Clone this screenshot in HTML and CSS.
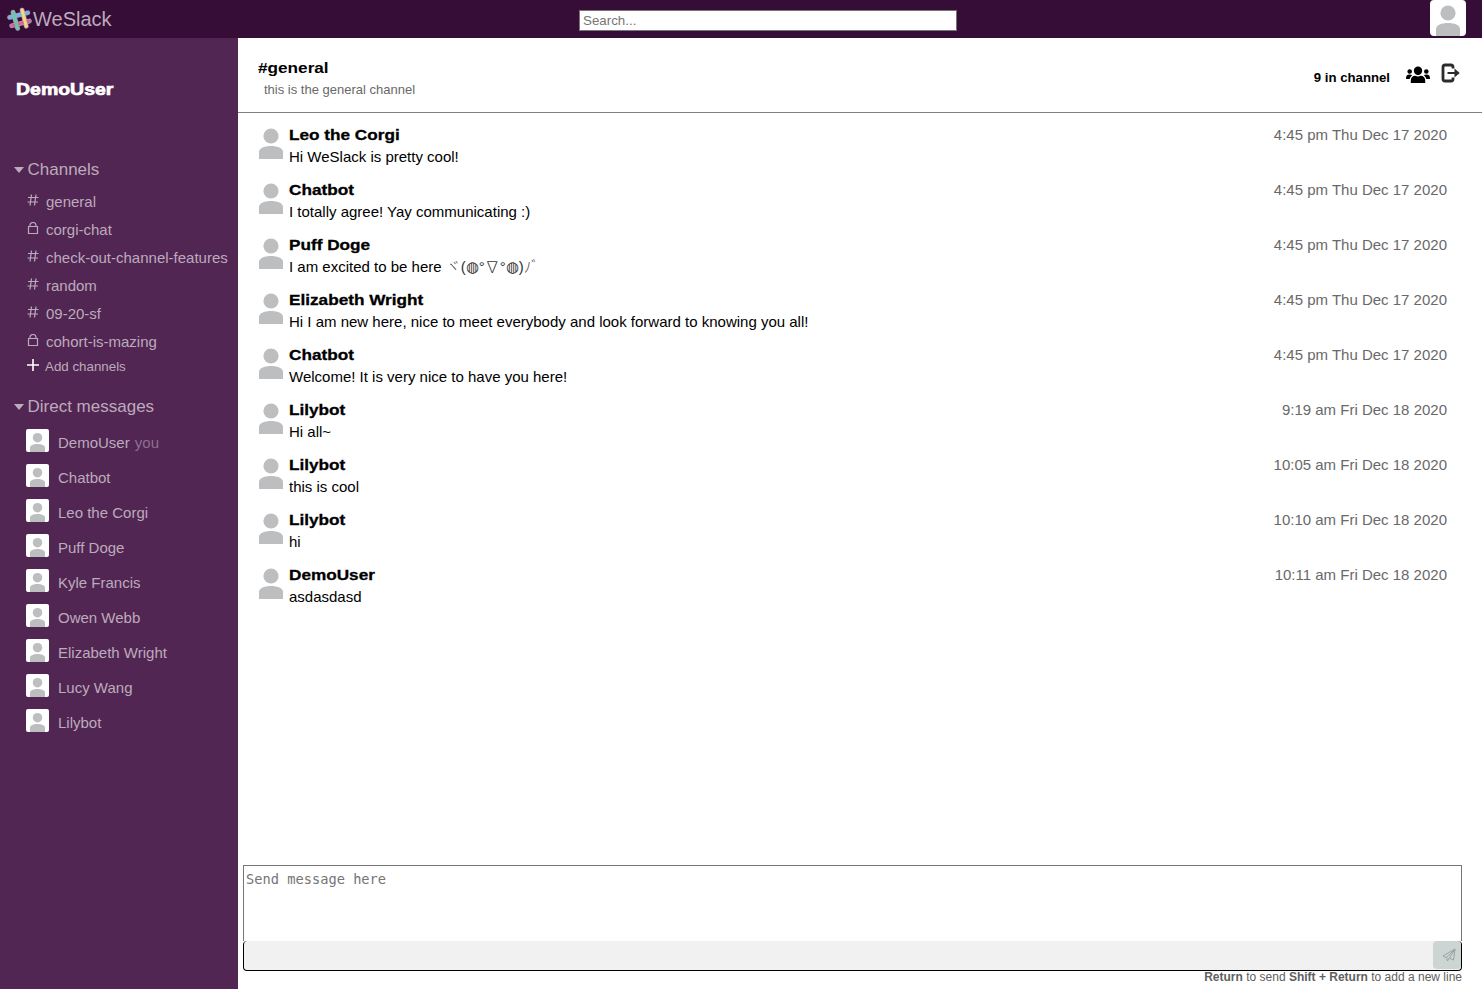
FILE: index.html
```
<!DOCTYPE html>
<html lang="en">
<head>
<meta charset="utf-8">
<title>WeSlack</title>
<link rel="stylesheet" href="styles.css">
</head>
<body>
<svg class="defs" aria-hidden="true">
  <symbol id="person" viewBox="0 0 24 32"><circle cx="12" cy="9" r="7.600"/><path d="M0 32v-7c0-4 6-6 12-6s12 2 12 6v7z"/></symbol>
  <symbol id="hash" viewBox="0 0 12 12"><path d="M4.500 0.500L3 11.500M9 0.500L7.500 11.500M1 3.500h10.500M0.500 8h10.500"/></symbol>
  <symbol id="lock" viewBox="0 0 12 12"><path d="M1.500 4.500h9v7h-9zM3 4.500V3.200a3 2.700 0 0 1 6 0V4.500"/></symbol>
</svg>
<header class="topbar">
  <div class="brand">
    <svg class="logo" viewBox="0 0 24 24"><g class="logo-edge"><path d="M2.500 10L20 5.500M4.500 18L21.500 13.500M5.800 5L10.200 20.500M14.500 3L18.500 18.500"/></g><path class="blue" d="M2.500 10L20 5.500"/><path class="pink" d="M4.500 18L21.500 13.500"/><path class="green" d="M5.800 5L10.200 20.500"/><path class="yellow" d="M14.500 3L18.500 18.500"/></svg>
    <span>WeSlack</span>
  </div>
  <input class="search" type="text" placeholder="Search...">
  <div class="account"><svg><use href="#person"/></svg></div>
</header>
<div class="workspace">
  <aside class="sidebar">
    <h1 class="user wide">DemoUser</h1>
    <h2 class="heading"><i class="caret"></i>Channels</h2>
    <ul class="channels">
      <li><svg><use href="#hash"/></svg>general</li>
      <li><svg><use href="#lock"/></svg>corgi-chat</li>
      <li><svg><use href="#hash"/></svg>check-out-channel-features</li>
      <li><svg><use href="#hash"/></svg>random</li>
      <li><svg><use href="#hash"/></svg>09-20-sf</li>
      <li><svg><use href="#lock"/></svg>cohort-is-mazing</li>
    </ul>
    <div class="add"><svg viewBox="0 0 12 12"><path d="M6 0v12M0 6h12"/></svg>Add channels</div>
    <h2 class="heading"><i class="caret"></i>Direct messages</h2>
    <ul class="people">
      <li><b class="thumb"><svg><use href="#person"/></svg></b>DemoUser <span class="you">you</span></li>
      <li><b class="thumb"><svg><use href="#person"/></svg></b>Chatbot</li>
      <li><b class="thumb"><svg><use href="#person"/></svg></b>Leo the Corgi</li>
      <li><b class="thumb"><svg><use href="#person"/></svg></b>Puff Doge</li>
      <li><b class="thumb"><svg><use href="#person"/></svg></b>Kyle Francis</li>
      <li><b class="thumb"><svg><use href="#person"/></svg></b>Owen Webb</li>
      <li><b class="thumb"><svg><use href="#person"/></svg></b>Elizabeth Wright</li>
      <li><b class="thumb"><svg><use href="#person"/></svg></b>Lucy Wang</li>
      <li><b class="thumb"><svg><use href="#person"/></svg></b>Lilybot</li>
    </ul>
  </aside>
  <main class="main">
    <div class="channel-head">
      <div><div class="channel-name wide">#general</div><div class="topic">this is the general channel</div></div>
      <div class="tools">
        <span class="count">9 in channel</span>
        <svg class="members" viewBox="0 0 24 18"><circle cx="3.700" cy="5.500" r="2.300"/><circle cx="20.300" cy="5.500" r="2.300"/><circle cx="12" cy="4.700" r="4.200"/><path d="M0 12.500c0-2.500 1-4 3.500-4 1.200 0 2 .3 2.700.9C4.500 10.500 4 11.500 3.700 13H0zM24 12.500c0-2.500-1-4-3.500-4-1.200 0-2 .3-2.700.9 1.700 1.100 2.200 2.100 2.500 3.600H24zM4.800 17v-2.500c0-3 2-4.700 4.500-4.700 1.800.8 3.600.8 5.400 0 2.500 0 4.500 1.700 4.500 4.700V17z"/></svg>
        <svg class="leave" viewBox="0 0 19 20"><path d="M12 5.500V4Q12 2 10 2H4Q2 2 2 4v12q0 2 2 2h6Q12 18 12 16V14.500"/><path class="arrow" d="M6.500 10h9"/><path class="tip" d="M13.500 5.500v9L18.700 10z"/></svg>
      </div>
    </div>
    <div class="messages">
      <article class="message"><svg><use href="#person"/></svg><div><h3 class="wide">Leo the Corgi</h3><p>Hi WeSlack is pretty cool!</p></div><time>4:45 pm Thu Dec 17 2020</time></article>
      <article class="message"><svg><use href="#person"/></svg><div><h3 class="wide">Chatbot</h3><p>I totally agree! Yay communicating :)</p></div><time>4:45 pm Thu Dec 17 2020</time></article>
      <article class="message"><svg><use href="#person"/></svg><div><h3 class="wide">Puff Doge</h3><p>I am excited to be here <span class="kao">ヾ(◍°∇°◍)ﾉﾞ</span></p></div><time>4:45 pm Thu Dec 17 2020</time></article>
      <article class="message"><svg><use href="#person"/></svg><div><h3 class="wide">Elizabeth Wright</h3><p>Hi I am new here, nice to meet everybody and look forward to knowing you all!</p></div><time>4:45 pm Thu Dec 17 2020</time></article>
      <article class="message"><svg><use href="#person"/></svg><div><h3 class="wide">Chatbot</h3><p>Welcome! It is very nice to have you here!</p></div><time>4:45 pm Thu Dec 17 2020</time></article>
      <article class="message"><svg><use href="#person"/></svg><div><h3 class="wide">Lilybot</h3><p>Hi all~</p></div><time>9:19 am Fri Dec 18 2020</time></article>
      <article class="message"><svg><use href="#person"/></svg><div><h3 class="wide">Lilybot</h3><p>this is cool</p></div><time>10:05 am Fri Dec 18 2020</time></article>
      <article class="message"><svg><use href="#person"/></svg><div><h3 class="wide">Lilybot</h3><p>hi</p></div><time>10:10 am Fri Dec 18 2020</time></article>
      <article class="message"><svg><use href="#person"/></svg><div><h3 class="wide">DemoUser</h3><p>asdasdasd</p></div><time>10:11 am Fri Dec 18 2020</time></article>
    </div>
    <form class="composer">
      <textarea placeholder="Send message here"></textarea>
      <div class="actions"><button type="button" aria-label="Send"><svg viewBox="0 0 14 14"><path d="M13 1L1 8l3.500 1.500L13 1l-1.500 11-4-2L13 1M4.500 9.500L5.500 13l2-3"/></svg></button></div>
      <div class="hint"><b>Return</b> to send <b>Shift + Return</b> to add a new line</div>
    </form>
  </main>
</div>
</body>
</html>
```
FILE: styles.css
```
* { box-sizing: border-box; }
body { margin: 0; height: 989px; overflow: hidden; display: flex; flex-direction: column; background: #fff; font: 15px/22px "Liberation Sans", Arial, sans-serif; color: #000; }
h1, h2, h3, p, ul { margin: 0; padding: 0; list-style: none; }
svg { display: block; flex: none; }
.defs { position: absolute; width: 0; height: 0; }
.wide { width: max-content; font-weight: 700; transform: scaleX(1.145); transform-origin: left; -webkit-text-stroke: 0.3px currentColor; }

.topbar { height: 38px; flex: none; background: #350d36; display: grid; grid-template-columns: 579px 378px 1fr; align-items: start; }
.brand { display: flex; align-items: center; height: 38px; padding-left: 7px; font-size: 20px; color: #bcabbc; }
.logo { width: 25px; height: 25px; margin-right: 1px; fill: none; stroke-linecap: round; stroke-width: 3; }
.logo-edge { stroke: #a898be; stroke-width: 4.6; }
.blue { stroke: #79b4dc; stroke-dasharray: 2.5 1; }
.pink { stroke: #d4668f; stroke-dasharray: 2.5 1; }
.green { stroke: #6ec5ab; }
.yellow { stroke: #f8d57e; }
.search { width: 378px; height: 21px; margin-top: 10px; padding: 1px 3px; border: 1px solid #767676; font: 13.33px "Liberation Sans", Arial, sans-serif; background: #fff; }
.search::placeholder, textarea::placeholder { color: #757575; opacity: 1; }
.account { justify-self: end; width: 36px; height: 36px; margin-right: 16px; border-radius: 4px; background: #fff; padding: 4px 6px 0; fill: #bcbec0; overflow: hidden; }
.account svg { width: 24px; height: 32px; }

.workspace { flex: 1; display: flex; min-height: 0; }
.sidebar { width: 238px; flex: none; background: #522653; color: #bcabbc; padding-top: 40px; }
.user { margin: 0 0 56px 16px; font-size: 17px; line-height: 24px; color: #fff; -webkit-text-stroke-width: 0.7px; }
.heading { display: flex; align-items: center; height: 24px; padding-left: 14px; font-size: 17px; font-weight: 400; }
.caret { border: 5.500px solid transparent; border-top: 6px solid #bcabbc; border-bottom: 0; margin-right: 3.5px; }
.channels { padding: 6px 0 0 27px; }
.channels li { height: 28px; display: flex; align-items: center; white-space: nowrap; }
.channels svg { width: 12px; height: 12px; margin: -5px 7px 0 0; fill: none; stroke: #bcabbc; stroke-width: 1.200; }
.add { display: flex; align-items: center; height: 22px; padding-left: 27px; font-size: 13.33px; margin-bottom: 17px; }
.add svg { width: 12px; height: 12px; margin: -5px 6px 0 0; stroke: #fff; stroke-width: 1.600; }
.people { padding: 6px 0 0 26px; }
.people li { height: 35px; display: flex; align-items: center; white-space: pre; }
.thumb { width: 23px; height: 23px; margin: -5px 9px 0 0; background: #fff; border-radius: 2px; padding: 3px 4px 0; fill: #bcbec0; }
.thumb svg { width: 15px; height: 20px; }
.you { color: #8e6f8f; margin-left: 1px; }

.main { flex: 1; min-width: 0; display: flex; flex-direction: column; }
.channel-head { height: 75px; flex: none; display: flex; justify-content: space-between; border-bottom: 1px solid #808080; padding: 19px 21px 0 20px; }
.channel-name { -webkit-text-stroke-width: 0; }
.topic { font-size: 13px; color: #696969; padding-left: 6px; }
.tools { display: flex; align-items: flex-start; }
.count { font-size: 13.2px; font-weight: 700; margin: 10px 16px 0 0; }
.members { width: 24px; height: 18px; margin: 9px 11px 0 0; }
.leave { width: 19px; height: 20px; margin: 6px 1px 0 0; fill: none; stroke: #2b2b2b; stroke-width: 2.800; }
.leave .arrow { stroke-width: 2; }
.leave .tip { fill: #2b2b2b; stroke: none; }
.messages { flex: 1; padding: 11px 35px 0 21px; }
.message { height: 55px; display: flex; }
.message > svg { width: 24px; height: 32px; margin: 3px 6px 0 0; fill: #bcbec0; }
.message > div { flex: 1; }
.message h3 { font-size: 15px; line-height: 22px; }
.message time { color: #696969; }
.kao { color: #333; font-family: "Liberation Sans", "Noto Sans CJK JP", sans-serif; font-weight: 300; }

.composer { height: 124px; margin: 0 20px 0 5px; display: flex; flex-direction: column; }
textarea { display: block; height: 76px; flex: none; resize: none; margin: 0; padding: 4px 2px; border: 1px solid #767676; border-bottom: 0; font: 13.7px/18px "DejaVu Sans Mono", monospace; background: #fff; }
.actions { height: 30px; flex: none; display: flex; justify-content: flex-end; border: 1px solid #000; border-top: 0; border-radius: 4px; background: #f1f1f1; }
.actions button { width: 28px; height: 28px; border: 0; border-radius: 4px; padding: 0; background: #cdd5d3; display: grid; place-items: center; }
.actions svg { width: 14px; height: 14px; margin-left: 3px; fill: none; stroke: #98a4a4; }
.hint { text-align: right; font-size: 12px; line-height: 13px; color: #606060; white-space: nowrap; }
```
